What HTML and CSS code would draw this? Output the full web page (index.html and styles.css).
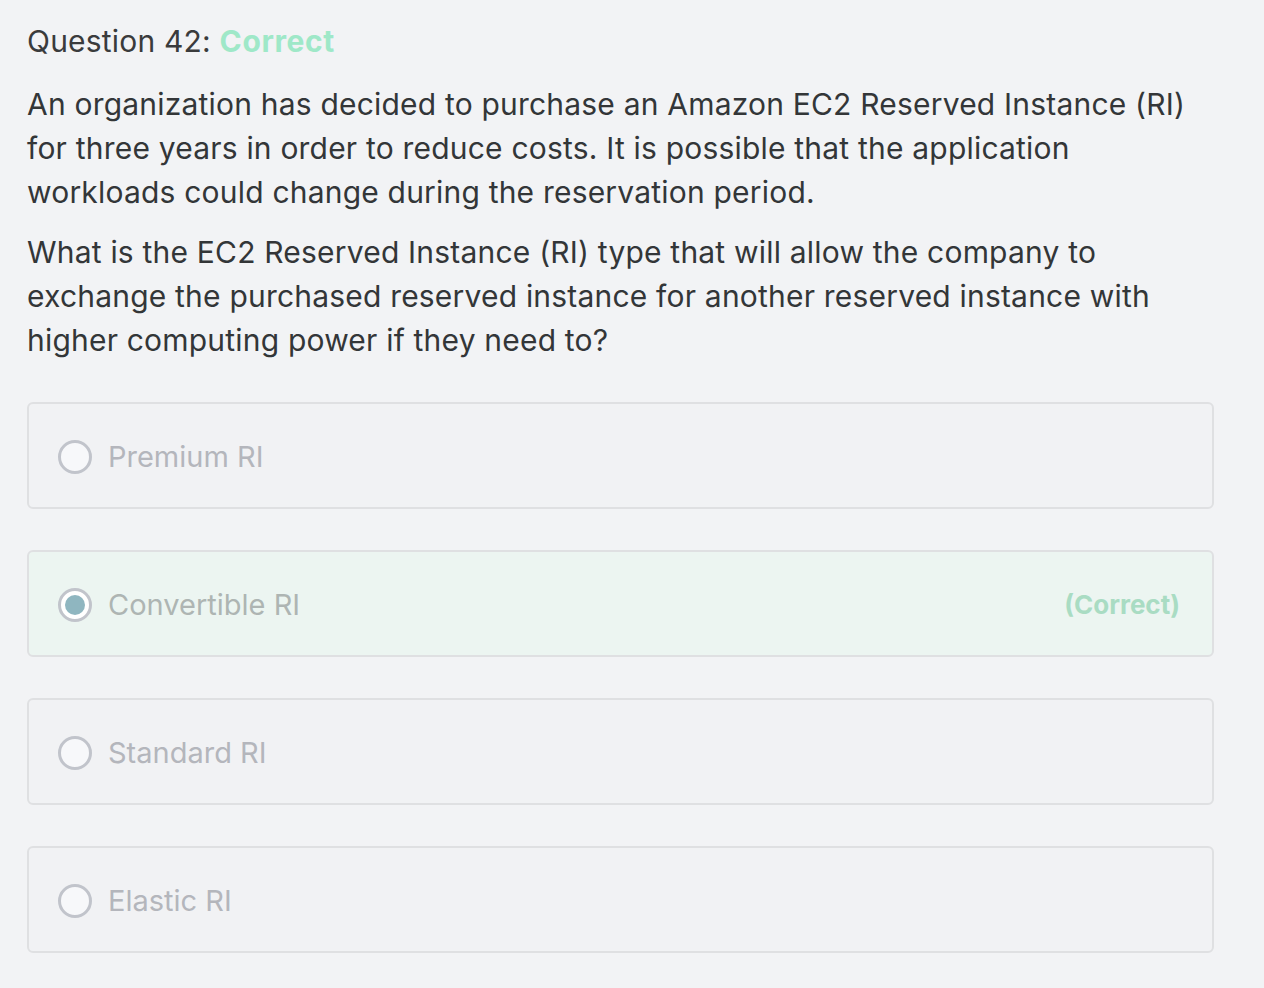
FILE: index.html
```html
<!DOCTYPE html>
<html>
<head>
<meta charset="utf-8">
<link rel="stylesheet" href="styles.css">
</head>
<body>
<div class="page">
  <div class="title">Question 42: <span class="status">Correct</span></div>
  <div class="question">
    <p>An organization has decided to purchase an Amazon EC2 Reserved Instance (RI) for three years in order to reduce costs. It is possible that the application workloads could change during the reservation period.</p>
    <p>What is the EC2 Reserved Instance (RI) type that will allow the company to exchange the purchased reserved instance for another reserved instance with higher computing power if they need to?</p>
  </div>
  <div class="options">
    <div class="option"><span class="radio"></span><span class="label">Premium RI</span></div>
    <div class="option correct"><span class="radio checked"></span><span class="label">Convertible RI</span><span class="tag">(Correct)</span></div>
    <div class="option"><span class="radio"></span><span class="label">Standard RI</span></div>
    <div class="option"><span class="radio"></span><span class="label">Elastic RI</span></div>
  </div>
</div>
</body>
</html>
```
FILE: styles.css
```css
html, body {
  margin: 0;
  padding: 0;
  background: #f2f3f5;
}
body {
  font-family: Inter, "Noto Sans", sans-serif;
  color: #333638;
}
.page {
  padding: 20px 50px 0 27px;
}
.title {
  font-size: 30px;
  line-height: 42px;
  letter-spacing: 0.2px;
  color: #3a3b3c;
}
.status {
  color: #9fe8c8;
  font-weight: 700;
  letter-spacing: 0.6px;
}
.question {
  margin-top: 20px;
  font-size: 30px;
  line-height: 44px;
  letter-spacing: 0.2px;
}
.question p {
  margin: 0 0 16px 0;
}
.options {
  margin-top: 40px;
  display: flex;
  flex-direction: column;
  gap: 41px;
}
.option {
  height: 103px;
  border: 2px solid #dfe0e2;
  border-radius: 6px;
  background: #f1f2f4;
  display: flex;
  align-items: center;
  padding: 2px 32px 0 29px;
  box-sizing: content-box;
}
.option {
  height: 101px;
}
.option.correct {
  background: #ecf5f1;
}
.radio {
  width: 28px;
  height: 28px;
  border: 3.5px solid #c1c4cb;
  border-radius: 50%;
  background: #f7f8fa;
  flex: none;
  position: relative;
}
.radio.checked::after {
  content: "";
  position: absolute;
  left: 4px;
  top: 4px;
  width: 20px;
  height: 20px;
  border-radius: 50%;
  background: #8fb6c0;
}
.radio.checked {
  background: #fff;
}
.label {
  margin-left: 16px;
  font-size: 29px;
  color: #b4b6bc;
}
.correct .label {
  color: #aeb5b3;
}
.tag {
  margin-left: auto;
  font-size: 26px;
  font-weight: 700;
  color: #a9dcc3;
}
```
